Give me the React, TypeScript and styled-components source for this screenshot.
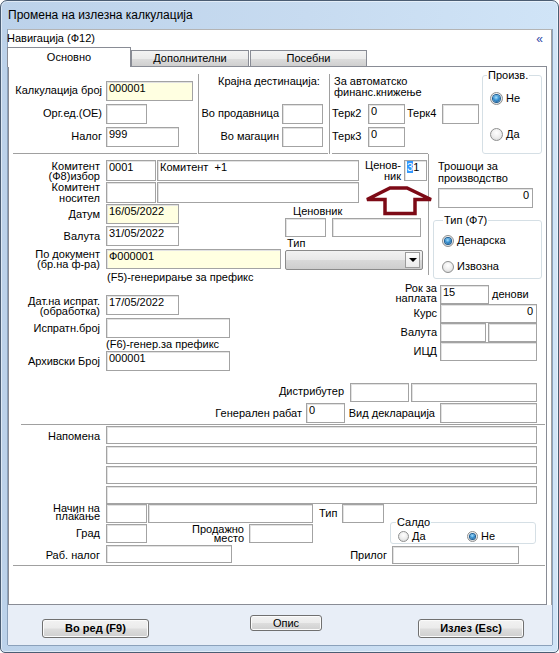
import React from 'react';
import styled, { createGlobalStyle } from 'styled-components';

const LINE = '#a0a0a0';
const TAB_LINE = '#898c95';

const GlobalStyle = createGlobalStyle`
  *, *::before, *::after { box-sizing: border-box; }
  html, body { margin: 0; padding: 0; background: #fff; }
  body {
    font-family: "Liberation Sans", Arial, sans-serif;
    font-size: 11px;
    color: #000;
  }
`;

const Window = styled.div`
  width: 559px;
  height: 653px;
  border: 1px solid #4b5d73;
  border-radius: 7px 7px 5px 5px;
  background: linear-gradient(90deg, #bcd2ea 0%, #c7dbf0 55%, #d0e4f7 100%);
  display: flex;
  flex-direction: column;
  overflow: hidden;
  box-shadow: inset 0 0 0 1px rgba(255, 255, 255, 0.5);
`;

const TitleBar = styled.div`
  height: 28px;
  flex: none;
  display: flex;
  align-items: center;
  padding-left: 7px;
  font-size: 12px;
`;

const Client = styled.div`
  margin-left: 7px;
  width: 544px;
  height: 616px;
  flex: none;
  display: flex;
  flex-direction: column;
  background: #e8eef7;
  box-shadow: -1px 0 0 #8ba1bb, 1px 0 0 #8ba1bb, 0 1px 0 #8ba1bb;
`;

const NavPanel = styled.div`
  height: 576px;
  flex: none;
  background: #fff;
  border-top: 1px solid #b4b4b4;
  border-right: 1px solid ${LINE};
  display: flex;
  flex-direction: column;
`;

const NavHeader = styled.div`
  height: 17px;
  flex: none;
  display: flex;
  justify-content: space-between;
  line-height: 17px;
  padding-right: 8px;
  margin-left: -1px;
`;

const Collapse = styled.span`
  color: #2f47a6;
  font-size: 12px;
  line-height: 19px;
`;

const TabStrip = styled.div`
  height: 19px;
  flex: none;
  display: flex;
  align-items: flex-end;
  margin-left: -1px;
`;

const Tab = styled.div<{ $active?: boolean; $w: number; $ml?: number }>`
  position: relative;
  z-index: 1;
  flex: none;
  width: ${(p) => p.$w}px;
  height: ${(p) => (p.$active ? 20 : 16)}px;
  margin-left: ${(p) => p.$ml ?? 0}px;
  margin-bottom: ${(p) => (p.$active ? -1 : 0)}px;
  border: 1px solid ${TAB_LINE};
  border-bottom: none;
  background: ${(p) =>
    p.$active ? '#fff' : 'linear-gradient(#f3f3f3 0%, #ebebeb 50%, #dddddd 51%, #cfcfcf 100%)'};
  text-align: center;
  line-height: ${(p) => (p.$active ? 18 : 15)}px;
`;

const TabPage = styled.div`
  position: relative;
  width: 539px;
  height: 539px;
  flex: none;
  border: 1px solid ${TAB_LINE};
  background: #fff;
`;

/* ---------- generic form parts ---------- */

const FormRow = styled.div<{ $h?: number; $mt?: number }>`
  display: flex;
  align-items: flex-start;
  flex: none;
  height: ${(p) => p.$h ?? 20}px;
  margin-top: ${(p) => p.$mt ?? 0}px;
`;

const Column = styled.div<{ $w?: number; $gap?: number; $ml?: number }>`
  display: flex;
  flex-direction: column;
  flex: none;
  width: ${(p) => (p.$w ? `${p.$w}px` : 'auto')};
  gap: ${(p) => p.$gap ?? 0}px;
  margin-left: ${(p) => p.$ml ?? 0}px;
`;

const Label = styled.div<{
  $w: number;
  $lh?: number;
  $ml?: number;
  $mt?: number;
  $left?: boolean;
}>`
  flex: none;
  width: ${(p) => p.$w}px;
  margin: ${(p) => p.$mt ?? 0}px 0 0 ${(p) => p.$ml ?? 0}px;
  line-height: ${(p) => p.$lh ?? 20}px;
  text-align: ${(p) => (p.$left ? 'left' : 'right')};
  white-space: pre;
`;

const Caption = styled.div<{ $lh?: number; $ml?: number; $mt?: number }>`
  flex: none;
  margin: ${(p) => p.$mt ?? 0}px 0 0 ${(p) => p.$ml ?? 0}px;
  line-height: ${(p) => p.$lh ?? 13}px;
  white-space: pre;
`;

const TextBox = styled.div<{
  $w: number;
  $h?: number;
  $ml?: number;
  $mt?: number;
  $yellow?: boolean;
  $right?: boolean;
}>`
  flex: none;
  width: ${(p) => p.$w}px;
  height: ${(p) => p.$h ?? 20}px;
  margin: ${(p) => p.$mt ?? 0}px 0 0 ${(p) => p.$ml ?? 0}px;
  border: 1px solid #a3a3a3;
  box-shadow: inset 1px 1px 0 #e2e2e2;
  background: ${(p) => (p.$yellow ? '#ffffe1' : '#fff')};
  padding: 0 ${(p) => (p.$right ? 3 : 2)}px 0 2px;
  line-height: 13px;
  text-align: ${(p) => (p.$right ? 'right' : 'left')};
  white-space: pre;
  overflow: hidden;
`;

const Selected = styled.span`
  background: #3399ff;
  color: #fff;
`;

const Group = styled.fieldset<{ $w: number; $h: number; $ml?: number; $mt?: number }>`
  flex: none;
  min-width: 0;
  width: ${(p) => p.$w}px;
  height: ${(p) => p.$h}px;
  margin: ${(p) => p.$mt ?? 0}px 0 0 ${(p) => p.$ml ?? 0}px;
  padding: 0;
  border: 1px solid #d5dfe5;
  border-radius: 3px;
`;

const GroupTitle = styled.legend<{ $ml: number }>`
  margin-left: ${(p) => p.$ml}px;
  padding: 0 1px;
  font-size: 11px;
  line-height: 12px;
`;

const RadioItem = styled.div<{ $ml?: number; $mt?: number; $w?: number }>`
  display: flex;
  align-items: center;
  flex: none;
  gap: 3px;
  width: ${(p) => (p.$w ? `${p.$w}px` : 'auto')};
  margin: ${(p) => p.$mt ?? 0}px 0 0 ${(p) => p.$ml ?? 0}px;
  line-height: 13px;
`;

const RadioDot = styled.span<{ $on?: boolean; $size?: number }>`
  flex: none;
  width: ${(p) => p.$size ?? 13}px;
  height: ${(p) => p.$size ?? 13}px;
  border-radius: 50%;
  border: 1px solid #8e8f8f;
  background: radial-gradient(circle at 50% 35%, #ffffff 0%, #ececec 55%, #cfd0d1 100%);
  display: flex;
  align-items: center;
  justify-content: center;
  &::after {
    content: '';
    display: ${(p) => (p.$on ? 'block' : 'none')};
    width: ${(p) => (p.$size ?? 13) - 6}px;
    height: ${(p) => (p.$size ?? 13) - 6}px;
    border-radius: 50%;
    background: radial-gradient(circle at 45% 35%, #a9e2ff 0%, #3b94d4 45%, #0d4b83 100%);
    box-shadow: 0 0 0 1px #1b5c92;
  }
`;

const Combo = styled.div<{ $w: number; $ml?: number; $mt?: number }>`
  flex: none;
  width: ${(p) => p.$w}px;
  height: 20px;
  margin: ${(p) => p.$mt ?? 0}px 0 0 ${(p) => p.$ml ?? 0}px;
  border: 1px solid #8a8a8a;
  border-radius: 2px;
  background: linear-gradient(#f2f2f2 0%, #e8e8e8 50%, #d9d9d9 51%, #cdcdcd 100%);
  display: flex;
  justify-content: flex-end;
  align-items: center;
  padding-right: 2px;
`;

const ComboButton = styled.span`
  width: 15px;
  height: 16px;
  border: 1px solid #9b9b9b;
  background: linear-gradient(#fdfdfd, #ebebeb);
  display: flex;
  align-items: center;
  justify-content: center;
  &::after {
    content: '';
    border-left: 4px solid transparent;
    border-right: 4px solid transparent;
    border-top: 4px solid #000;
  }
`;

/* ---------- bands of the tab page ---------- */

const TopBand = styled.div`
  display: flex;
  align-items: flex-start;
  height: 87px;
`;

const IdentBlock = styled.div`
  margin-left: 4px;
  width: 184px;
  height: 87px;
  flex: none;
  border-bottom: 1px solid ${LINE};
  padding-top: 14px;
  display: flex;
  flex-direction: column;
  gap: 3px;
`;

const DestBlock = styled.div`
  margin: 7px 0 0 1px;
  width: 130px;
  height: 80px;
  flex: none;
  border-left: 1px solid ${LINE};
  border-bottom: 1px solid ${LINE};
  padding-top: 1px;
  display: flex;
  flex-direction: column;
`;

const TercBlock = styled.div`
  margin: 7px 0 0 1px;
  width: 152px;
  height: 80px;
  flex: none;
  border-left: 1px solid ${LINE};
  background: linear-gradient(${LINE}, ${LINE}) no-repeat 2px 100% / 96px 1px;
  padding-top: 2px;
  display: flex;
  flex-direction: column;
`;

const MidBand = styled.div`
  display: flex;
  align-items: flex-start;
  height: 129px;
`;

const CostBlock = styled.div`
  width: 117px;
  height: 121px;
  flex: none;
  border-left: 1px solid ${LINE};
  padding-left: 9px;
  display: flex;
  flex-direction: column;
`;

const LowerBand = styled.div`
  display: flex;
  align-items: flex-start;
  height: 88px;
`;

const NoteBand = styled.div`
  margin: 1px 0 0 4px;
  width: 532px;
  height: 142px;
  border-bottom: 1px solid ${LINE};
  background: linear-gradient(${LINE}, ${LINE}) no-repeat 8px 0 / calc(100% - 8px) 1px;
  padding-top: 2px;
  display: flex;
  flex-direction: column;
`;

const ArrowMark = styled.svg`
  position: absolute;
  left: 356px;
  top: 119px;
`;

const ButtonBar = styled.div`
  height: 40px;
  flex: none;
  display: flex;
  align-items: flex-start;
`;

const DialogButton = styled.button<{
  $w: number;
  $h: number;
  $ml: number;
  $mt: number;
  $bold?: boolean;
}>`
  flex: none;
  width: ${(p) => p.$w}px;
  height: ${(p) => p.$h}px;
  margin: ${(p) => p.$mt}px 0 0 ${(p) => p.$ml}px;
  padding: 0;
  border: 1px solid #707070;
  border-radius: 3px;
  background: linear-gradient(#f2f2f2 0%, #ebebeb 48%, #dddddd 52%, #cfcfcf 100%);
  box-shadow: inset 0 0 0 1px #fbfbfb;
  font-family: "Liberation Sans", Arial, sans-serif;
  font-size: 11px;
  font-weight: ${(p) => (p.$bold ? 700 : 400)};
  color: #000;
  line-height: 1;
`;

export default function App() {
  return (
    <>
      <GlobalStyle />
      <Window>
        <TitleBar>Промена на излезна калкулација</TitleBar>
        <Client>
          <NavPanel>
            <NavHeader>
              <span>Навигација (Ф12)</span>
              <Collapse>«</Collapse>
            </NavHeader>
            <TabStrip>
              <Tab $active $w={124}>Основно</Tab>
              <Tab $w={118}>Дополнителни</Tab>
              <Tab $w={117} $ml={1}>Посебни</Tab>
            </TabStrip>
            <TabPage>
              <TopBand>
                <IdentBlock>
                  <FormRow>
                    <Label $w={89} $lh={18}>Калкулација број</Label>
                    <TextBox $w={87} $ml={4} $yellow>000001</TextBox>
                  </FormRow>
                  <FormRow>
                    <Label $w={89} $lh={18}>Орг.ед.(ОЕ)</Label>
                    <TextBox $w={41} $ml={4} />
                  </FormRow>
                  <FormRow>
                    <Label $w={89} $lh={18}>Налог</Label>
                    <TextBox $w={73} $ml={4}>999</TextBox>
                  </FormRow>
                </IdentBlock>

                <DestBlock>
                  <Caption $ml={19}>Крајна дестинација:</Caption>
                  <FormRow $mt={16}>
                    <Label $w={80} $lh={18}>Во продавница</Label>
                    <TextBox $w={41} $ml={3} />
                  </FormRow>
                  <FormRow $mt={3}>
                    <Label $w={80} $lh={18}>Во магацин</Label>
                    <TextBox $w={41} $ml={3} />
                  </FormRow>
                </DestBlock>

                <TercBlock>
                  <Caption $ml={4} $lh={11}>{'За автоматско\nфинанс.книжење'}</Caption>
                  <FormRow $mt={6}>
                    <Label $w={36} $ml={2} $lh={18} $left>Терк2</Label>
                    <TextBox $w={37}>0</TextBox>
                    <Label $w={35} $ml={2} $lh={18} $left>Терк4</Label>
                    <TextBox $w={37} />
                  </FormRow>
                  <FormRow $mt={3}>
                    <Label $w={36} $ml={2} $lh={18} $left>Терк3</Label>
                    <TextBox $w={37}>0</TextBox>
                  </FormRow>
                </TercBlock>

                <Group $w={60} $h={85} $ml={1} $mt={2}>
                  <GroupTitle $ml={4}>Произв.</GroupTitle>
                  <RadioItem $ml={7} $mt={11}>
                    <RadioDot $on />
                    <span>Не</span>
                  </RadioItem>
                  <RadioItem $ml={7} $mt={23}>
                    <RadioDot />
                    <span>Да</span>
                  </RadioItem>
                </Group>
              </TopBand>

              <MidBand>
                <Column $w={419}>
                  <FormRow $mt={6} $h={21}>
                    <Label $w={91} $lh={10} $mt={1}>{'Комитент\n(Ф8)избор'}</Label>
                    <TextBox $w={50} $h={21} $ml={6}>0001</TextBox>
                    <TextBox $w={202} $h={21} $ml={1}>{'Комитент  +1'}</TextBox>
                    <Label $w={42} $lh={11}>{'Ценов-\nник'}</Label>
                    <TextBox $w={23} $h={21} $ml={3}>
                      <Selected>3</Selected>1
                    </TextBox>
                  </FormRow>
                  <FormRow $mt={1} $h={21}>
                    <Label $w={91} $lh={11}>{'Комитент\nносител'}</Label>
                    <TextBox $w={50} $h={21} $ml={6} />
                    <TextBox $w={202} $h={21} $ml={1} />
                  </FormRow>
                  <FormRow $mt={1} $h={80}>
                    <Column $w={275}>
                      <FormRow>
                        <Label $w={91}>Датум</Label>
                        <TextBox $w={73} $ml={6} $yellow>16/05/2022</TextBox>
                      </FormRow>
                      <FormRow $mt={2}>
                        <Label $w={91}>Валута</Label>
                        <TextBox $w={73} $ml={6}>31/05/2022</TextBox>
                      </FormRow>
                      <FormRow $mt={3}>
                        <Label $w={91} $lh={10}>{'По документ\n(бр.на ф-ра)'}</Label>
                        <TextBox $w={175} $ml={6} $yellow>Ф000001</TextBox>
                      </FormRow>
                      <Caption $ml={98} $mt={2}>(F5)-генерирање за префикс</Caption>
                    </Column>
                    <Column $w={144}>
                      <Caption $ml={9} $mt={1}>Ценовник</Caption>
                      <FormRow $h={19}>
                        <TextBox $w={41} $h={19} $ml={1} />
                        <TextBox $w={89} $h={19} $ml={6} />
                      </FormRow>
                      <Caption $ml={3} $lh={12}>Тип</Caption>
                      <Combo $w={138} $ml={1} $mt={1}>
                        <ComboButton />
                      </Combo>
                    </Column>
                  </FormRow>
                </Column>

                <CostBlock>
                  <Caption $lh={12} $mt={6}>{'Трошоци за\nпроизводство'}</Caption>
                  <TextBox $w={95} $mt={4} $right>0</TextBox>
                  <Group $w={109} $h={65} $ml={-5} $mt={6}>
                    <GroupTitle $ml={9}>Тип (Ф7)</GroupTitle>
                    <RadioItem $ml={8} $mt={8}>
                      <RadioDot $on $size={12} />
                      <span>Денарска</span>
                    </RadioItem>
                    <RadioItem $ml={8} $mt={13}>
                      <RadioDot $size={12} />
                      <span>Извозна</span>
                    </RadioItem>
                  </Group>
                </CostBlock>
              </MidBand>

              <LowerBand>
                <Column $w={275}>
                  <FormRow $mt={12}>
                    <Label $w={91} $lh={10} $mt={1}>{'Дат.на испрат.\n(обработка)'}</Label>
                    <TextBox $w={73} $ml={6}>17/05/2022</TextBox>
                  </FormRow>
                  <FormRow $mt={3}>
                    <Label $w={91}>Испратн.број</Label>
                    <TextBox $w={124} $ml={6} />
                  </FormRow>
                  <Caption $ml={97} $lh={12}>(F6)-генер.за префикс</Caption>
                  <FormRow $mt={1}>
                    <Label $w={91}>Архивски Број</Label>
                    <TextBox $w={124} $ml={6}>000001</TextBox>
                  </FormRow>
                </Column>
                <Column $w={261}>
                  <FormRow $h={21}>
                    <Label $w={153} $lh={10}>{'Рок за\nнаплата'}</Label>
                    <TextBox $w={49} $h={19} $ml={3} $mt={2}>15</TextBox>
                    <Caption $ml={3} $mt={2} $lh={19}>денови</Caption>
                  </FormRow>
                  <FormRow $h={19}>
                    <Label $w={153} $lh={19}>Курс</Label>
                    <TextBox $w={97} $h={19} $ml={3} $right>0</TextBox>
                  </FormRow>
                  <FormRow $h={19}>
                    <Label $w={153} $lh={19}>Валута</Label>
                    <TextBox $w={46} $h={19} $ml={3} />
                    <TextBox $w={49} $h={19} $ml={2} />
                  </FormRow>
                  <FormRow $h={19}>
                    <Label $w={153} $lh={19}>ИЦД</Label>
                    <TextBox $w={97} $h={19} $ml={3} />
                  </FormRow>
                </Column>
              </LowerBand>

              <FormRow $mt={12} $h={19}>
                <Label $w={335} $lh={16}>Дистрибутер</Label>
                <TextBox $w={59} $h={19} $ml={6} />
                <TextBox $w={126} $h={19} $ml={2} />
              </FormRow>
              <FormRow $mt={1}>
                <Label $w={293}>Генерален рабат</Label>
                <TextBox $w={39} $ml={4}>0</TextBox>
                <Label $w={90}>Вид декларација</Label>
                <TextBox $w={97} $ml={5} />
              </FormRow>

              <NoteBand>
                <FormRow $h={78}>
                  <Label $w={87}>Напомена</Label>
                  <Column $ml={6} $gap={2}>
                    <TextBox $w={431} $h={18} />
                    <TextBox $w={431} $h={18} />
                    <TextBox $w={431} $h={18} />
                    <TextBox $w={431} $h={18} />
                  </Column>
                </FormRow>
                <FormRow $h={40}>
                  <Column $w={371}>
                    <FormRow $h={19}>
                      <Label $w={87} $lh={8}>{'Начин на\nплаќање'}</Label>
                      <TextBox $w={41} $h={19} $ml={6} />
                      <TextBox $w={165} $h={19} $ml={1} />
                      <Label $w={23} $ml={6} $lh={19} $left>Тип</Label>
                      <TextBox $w={42} $h={19} />
                    </FormRow>
                    <FormRow $mt={1} $h={19}>
                      <Label $w={87} $lh={18}>Град</Label>
                      <TextBox $w={41} $h={19} $ml={6} />
                      <Label $w={97} $lh={8.5} $mt={1}>{'Продажно\nместо'}</Label>
                      <TextBox $w={64} $h={19} $ml={5} />
                    </FormRow>
                  </Column>
                  <Group $w={146} $h={28} $ml={6} $mt={12}>
                    <GroupTitle $ml={5}>Салдо</GroupTitle>
                    <FormRow $h={13} $mt={2}>
                      <RadioItem $ml={7} $w={69}>
                        <RadioDot $size={11} />
                        <span>Да</span>
                      </RadioItem>
                      <RadioItem>
                        <RadioDot $on $size={11} />
                        <span>Не</span>
                      </RadioItem>
                    </FormRow>
                  </Group>
                </FormRow>
                <FormRow $mt={1} $h={19}>
                  <Label $w={87}>Раб. налог</Label>
                  <TextBox $w={126} $h={18} $ml={6} />
                  <Label $w={155}>Прилог</Label>
                  <TextBox $w={127} $h={18} $ml={5} $mt={1} />
                </FormRow>
              </NoteBand>

              <ArrowMark width="68" height="30" viewBox="0 0 68 30">
                <polygon
                  points="2,13.5 25,2 42,2 66,13.5 50,13.5 50,27.5 20,27.5 20,13.5"
                  fill="none"
                  stroke="#7d0a16"
                  strokeWidth="3.5"
                  strokeLinejoin="miter"
                />
              </ArrowMark>
            </TabPage>
          </NavPanel>

          <ButtonBar>
            <DialogButton $w={107} $h={19} $ml={34} $mt={14} $bold>
              Во ред (F9)
            </DialogButton>
            <DialogButton $w={72} $h={16} $ml={101} $mt={10}>
              Опис
            </DialogButton>
            <DialogButton $w={106} $h={19} $ml={96} $mt={14} $bold>
              Излез (Esc)
            </DialogButton>
          </ButtonBar>
        </Client>
      </Window>
    </>
  );
}
